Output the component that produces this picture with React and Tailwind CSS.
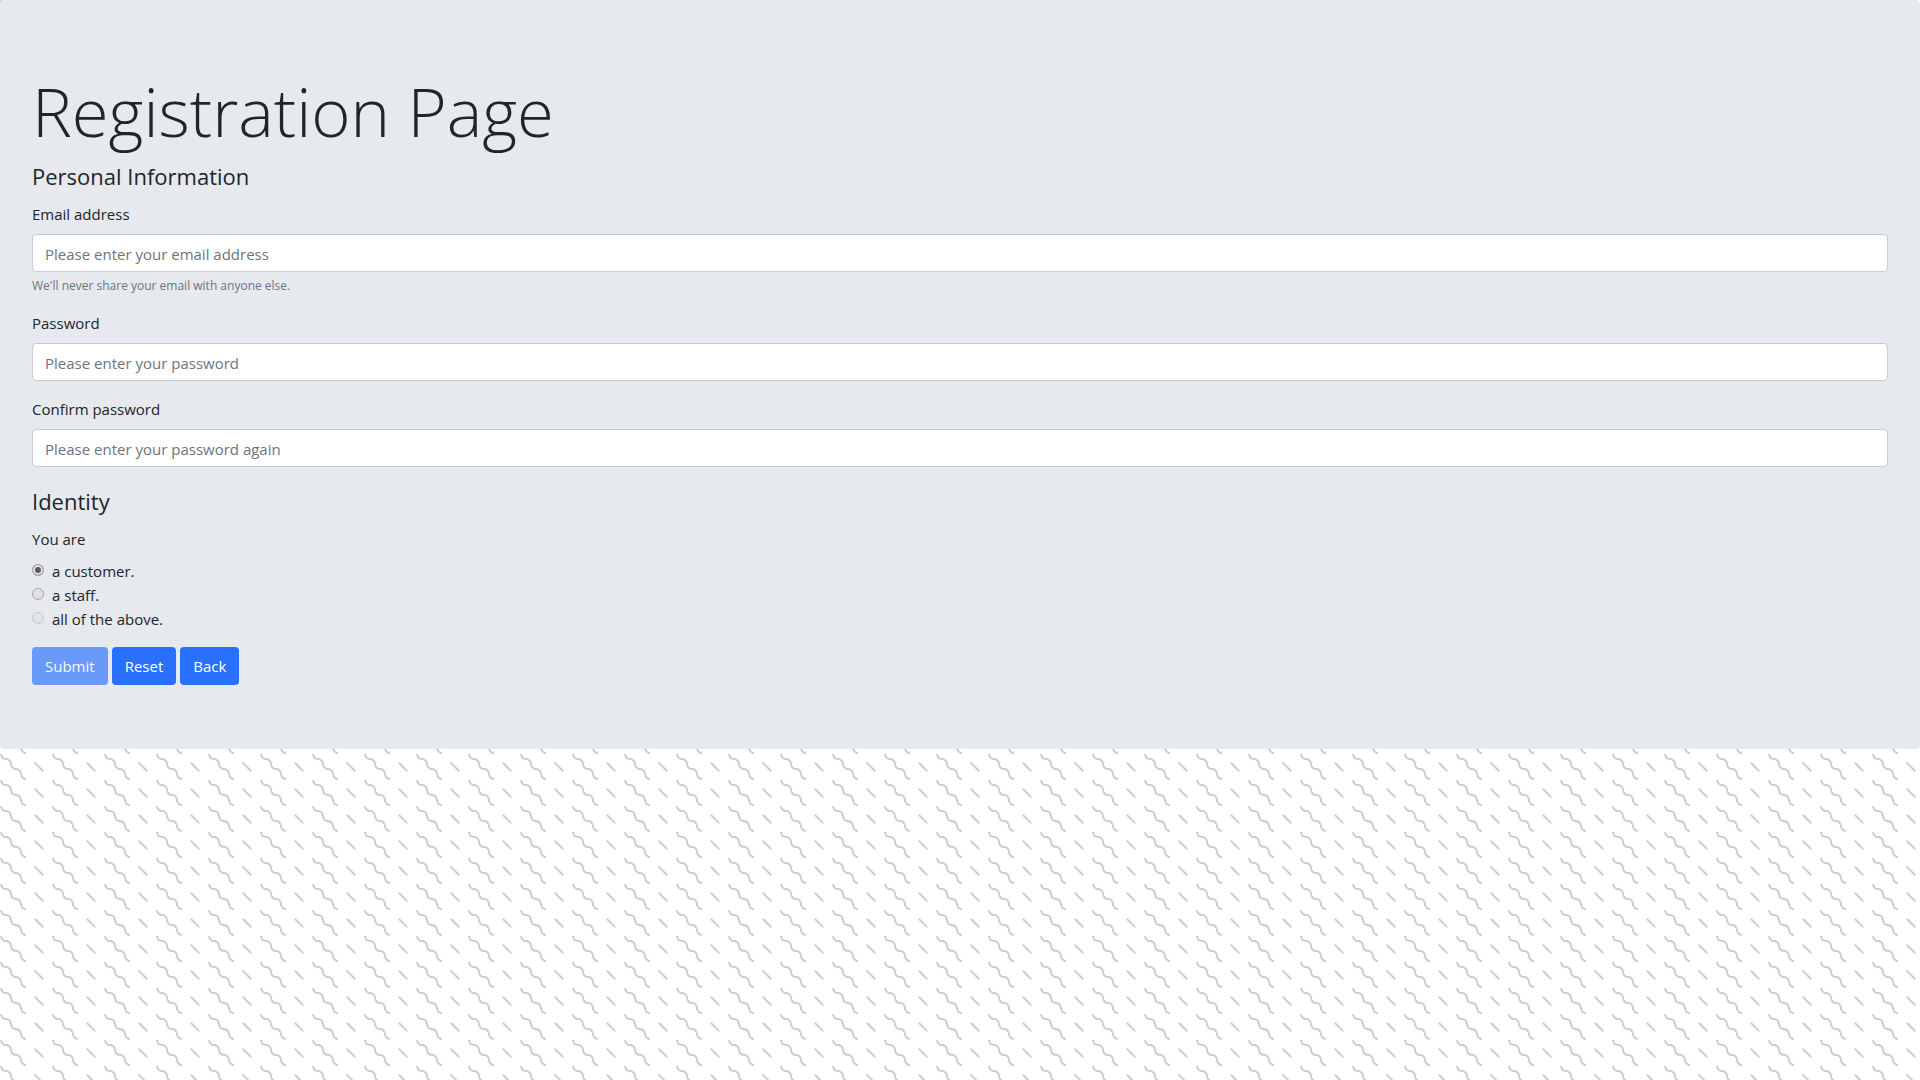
const fieldClass =
  'block w-full h-[38px] rounded border border-[#c8ccd2] bg-white px-3 pt-0.5 text-[15px] leading-6 text-[#495057] placeholder:text-[#6c757d] placeholder:opacity-100 outline-none focus:border-blue-400';

const buttonClass =
  'inline-flex h-[38px] items-center justify-center rounded bg-[#2970ff] px-[13px] text-[15px] leading-6 text-white disabled:opacity-65';

function WigglePattern() {
  return (
    <svg className="fixed inset-0 -z-10 h-full w-full" aria-hidden="true">
      <defs>
        <pattern id="wiggle" width="52" height="26" patternUnits="userSpaceOnUse">
          <path
            fill="#cdced5"
            d="M10 10c0-2.21-1.79-4-4-4-3.314 0-6-2.686-6-6h2c0 2.21 1.79 4 4 4 3.314 0 6 2.686 6 6 0 2.21 1.79 4 4 4 3.314 0 6 2.686 6 6 0 2.21 1.79 4 4 4v2c-3.314 0-6-2.686-6-6 0-2.21-1.79-4-4-4-3.314 0-6-2.686-6-6zm25.464-1.95l8.486 8.486-1.414 1.414-8.486-8.486 1.414-1.414z"
          />
        </pattern>
      </defs>
      <rect width="100%" height="100%" fill="url(#wiggle)" />
    </svg>
  );
}

function Field({ id, label, hint, ...props }) {
  return (
    <div className="mb-4">
      <label htmlFor={id} className="mb-2 block">
        {label}
      </label>
      <input id={id} className={fieldClass} {...props} />
      {hint && <small className="mt-1 block text-[12px] leading-[19px] text-[#6c757d]">{hint}</small>}
    </div>
  );
}

function Choice({ id, label, ...props }) {
  return (
    <div className="flex h-6 items-start">
      <input
        id={id}
        type="radio"
        name="identity"
        className="mt-[5px] mr-2 size-3 shrink-0 appearance-none rounded-full border border-[#a6a6a6] bg-linear-to-b from-[#e6e6e6] to-[#dcdcdc] checked:bg-none checked:bg-[#5a5a5a] checked:shadow-[inset_0_0_0_2px_#e6e6e6] disabled:opacity-50"
        {...props}
      />
      <label htmlFor={id}>{label}</label>
    </div>
  );
}

export default function App() {
  return (
    <div className="min-h-screen font-['Open_Sans','Noto_Sans',sans-serif] text-[15px] leading-6 text-[#212529]">
      <WigglePattern />
      <main className="rounded bg-[#e6e9ee] px-8 py-16">
        <h1 className="mb-2 pt-2 text-[67px] leading-[78px] font-light">Registration Page</h1>
        <form>
          <fieldset>
            <legend className="mb-2 text-[22px] leading-9">Personal Information</legend>
            <Field
              id="email"
              type="email"
              label="Email address"
              placeholder="Please enter your email address"
              hint="We'll never share your email with anyone else."
            />
            <Field id="password" type="password" label="Password" placeholder="Please enter your password" />
            <Field
              id="confirm"
              type="password"
              label="Confirm password"
              placeholder="Please enter your password again"
            />
          </fieldset>
          <fieldset className="mb-4">
            <legend className="mb-2 text-[22px] leading-9">Identity</legend>
            <p className="mb-2">You are</p>
            <Choice id="customer" label="a customer." defaultChecked />
            <Choice id="staff" label="a staff." />
            <Choice id="all" label="all of the above." disabled />
          </fieldset>
          <div className="flex gap-1">
            <button type="submit" disabled className={buttonClass}>
              Submit
            </button>
            <button type="reset" className={buttonClass}>
              Reset
            </button>
            <a href="#" className={buttonClass}>
              Back
            </a>
          </div>
        </form>
      </main>
    </div>
  );
}
